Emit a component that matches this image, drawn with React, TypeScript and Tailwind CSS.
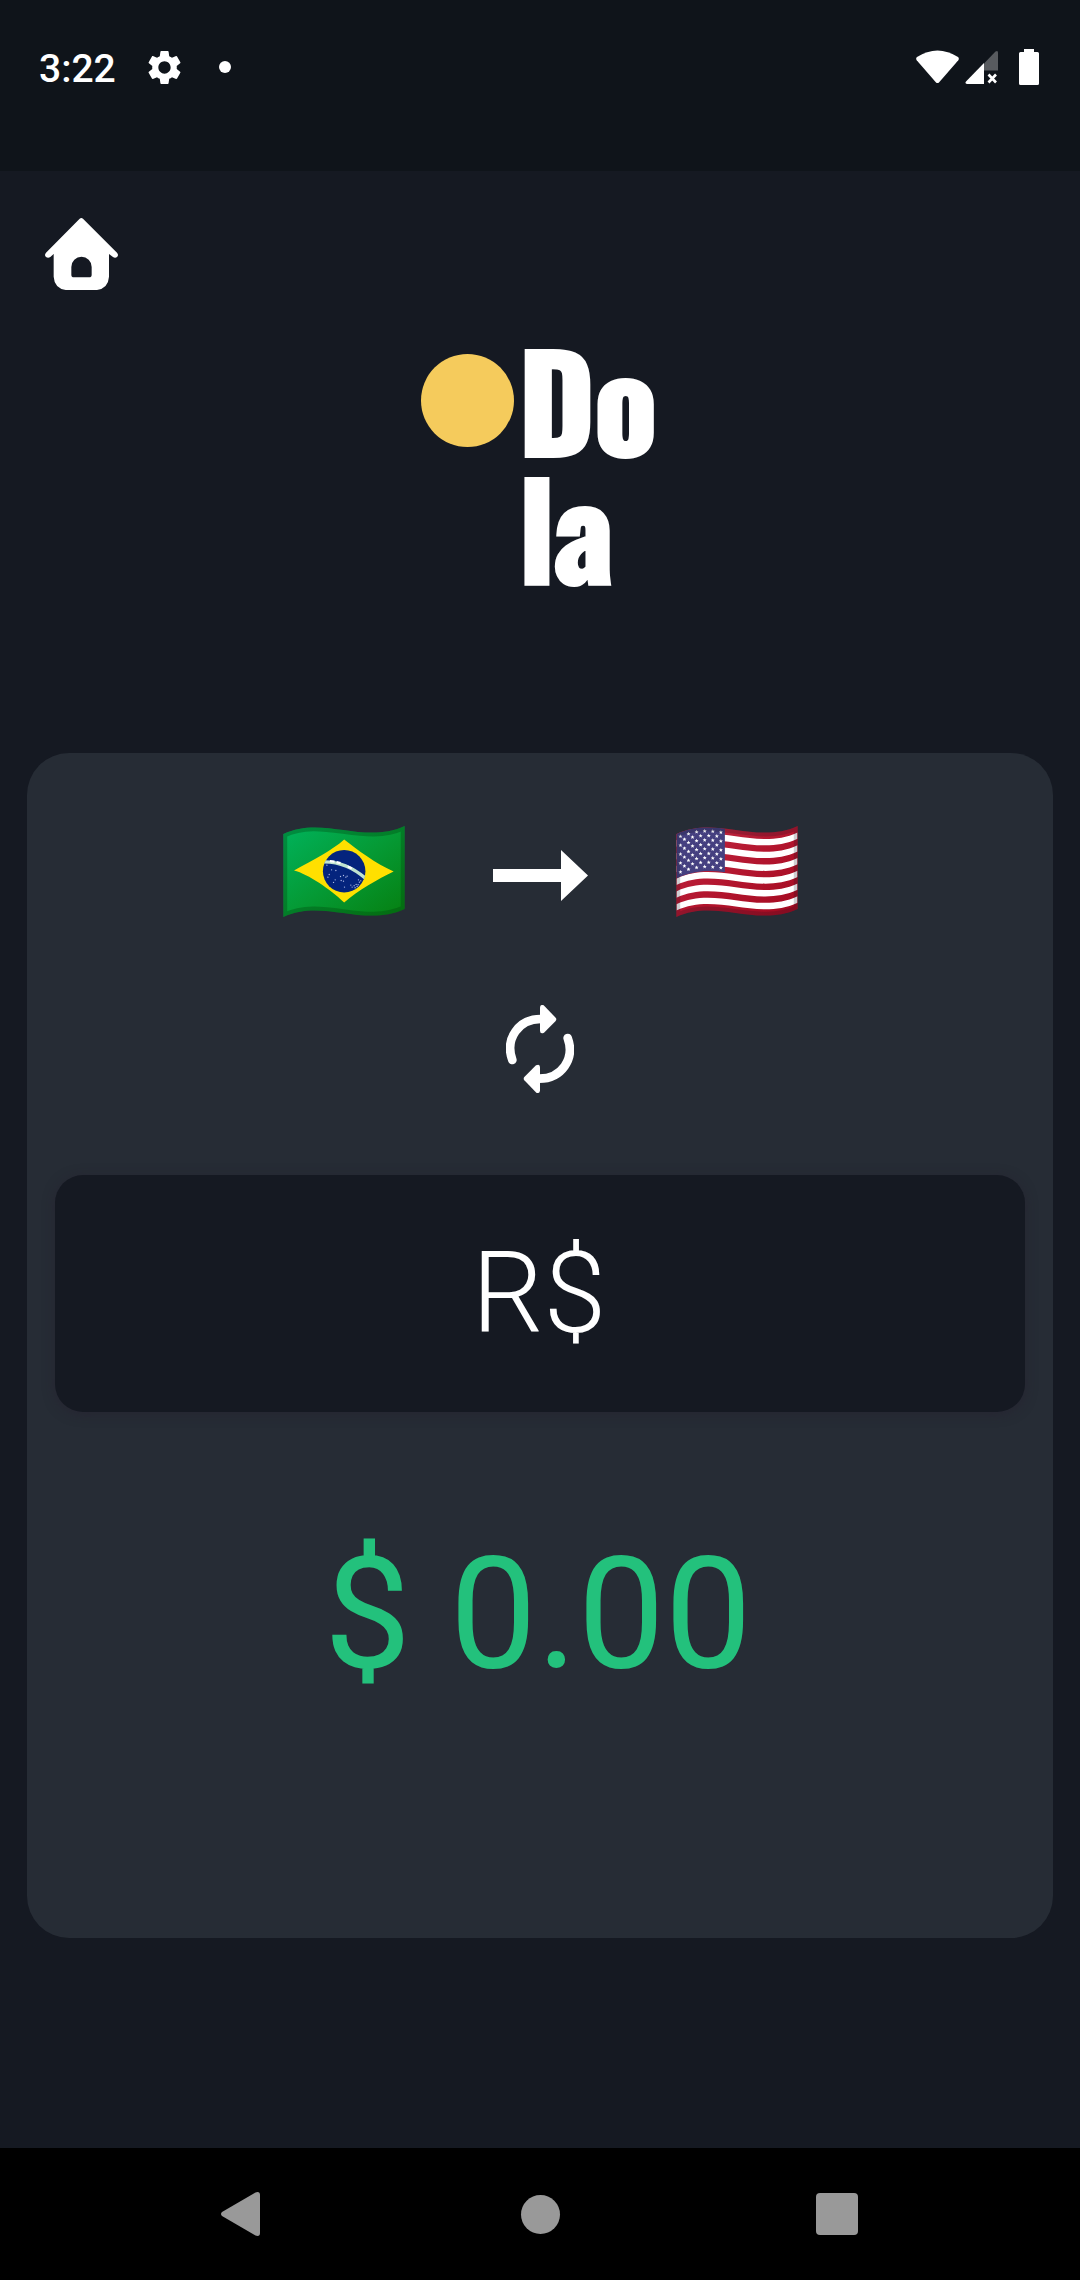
import { useId, useState } from "react";
import { MdSettings } from "react-icons/md";

const WAVE_FLAG =
  "M0 24C118 -33 242 57 365 0V250C242 307 118 217 0 274Z";

const STAR_COLUMNS = [32, 27.5, 24, 21, 18.5, 17, 16, 16.5, 17, 18, 19.5];

function BrazilFlag() {
  const id = useId();
  return (
    <svg viewBox="0 0 365 274" className="h-[91px] w-[122px]" role="img" aria-label="Brazil">
      <defs>
        <linearGradient id={id + "g"} x1="0" y1="0" x2="1" y2="1">
          <stop offset="0" stopColor="#00b35c" />
          <stop offset="0.5" stopColor="#059a35" />
          <stop offset="1" stopColor="#067f10" />
        </linearGradient>
        <clipPath id={id + "c"}>
          <path d={WAVE_FLAG} />
        </clipPath>
        <clipPath id={id + "b"}>
          <ellipse cx="183" cy="136" rx="65" ry="63" />
        </clipPath>
      </defs>
      <path d={WAVE_FLAG} fill={"url(#" + id + "g)"} />
      <g clipPath={"url(#" + id + "c)"}>
        <path d={WAVE_FLAG} fill="none" stroke="#00400b" strokeOpacity="0.32" strokeWidth="23" />
      </g>
      <path
        d="M183 41C220 70 280 115 332 137C285 160 225 194 183 230C140 190 75 145 32 134C90 102 145 75 183 41Z"
        fill="#ffe000"
      />
      <ellipse cx="183" cy="136" rx="64" ry="64" fill="#04247d" />
      <g clipPath={"url(#" + id + "b)"}>
        <path d="M116 108C165 106 210 124 250 160" fill="none" stroke="#bfe3cf" strokeWidth="10" />
        <path d="M140 106l14 1M160 109l12 3M194 122l12 6" stroke="#ffffff" strokeWidth="7" />
      </g>
      <g fill="#aebbe6">
        {[
          [131, 118], [138, 146], [134, 154], [158, 134], [156, 162], [151, 170],
          [172, 152], [174, 164], [181, 149], [188, 154], [192, 151], [181, 166],
          [184, 184], [203, 178], [207, 184], [213, 180], [219, 176], [216, 186],
          [225, 177], [229, 169], [226, 162], [145, 132], [233, 165], [222, 182],
        ].map(([x, y]) => (
          <circle key={x + "-" + y} cx={x} cy={y} r="2" />
        ))}
      </g>
    </svg>
  );
}

function UsaFlag() {
  const id = useId();
  const stripe = 250 / 13;
  return (
    <svg viewBox="0 0 365 274" className="h-[91px] w-[122px]" role="img" aria-label="United States">
      <defs>
        <linearGradient id={id + "r"} x1="0" y1="0" x2="1" y2="1">
          <stop offset="0" stopColor="#c12b44" />
          <stop offset="0.5" stopColor="#b3162f" />
          <stop offset="1" stopColor="#a30a20" />
        </linearGradient>
        <clipPath id={id + "c"}>
          <path d={WAVE_FLAG} />
        </clipPath>
      </defs>
      <path d={WAVE_FLAG} fill={"url(#" + id + "r)"} />
      <g clipPath={"url(#" + id + "c)"}>
        {[1, 3, 5, 7, 9, 11].map((n) => (
          <path
            key={n}
            d="M0 24C118 -33 242 57 365 0V19.2C242 76.2 118 -13.8 0 43.2Z"
            transform={"translate(0 " + n * stripe + ")"}
            fill="#ffffff"
          />
        ))}
        <path d="M0 24C50 0 98 2 146 8V139C98 132 50 134 0 158Z" fill="#454080" />
        {STAR_COLUMNS.map((top, col) =>
          Array.from({ length: col % 2 === 0 ? 5 : 4 }, (_, row) => (
            <path
              key={col + "-" + row}
              transform={"translate(" + (12 + col * 12.2) + " " + (top - 1 + row * 26.8 + (col % 2 === 0 ? 0 : 13.4)) + ")"}
              d="M0-6L1.7-1.9L6-1.7L2.7 1.2L3.8 5.4L0 3L-3.8 5.4L-2.7 1.2L-6-1.7L-1.7-1.9Z"
              fill="#ffffff"
            />
          )),
        )}
        <path d={WAVE_FLAG} fill="none" stroke="#10101c" strokeOpacity="0.2" strokeWidth="23" />
      </g>
    </svg>
  );
}

function StatusBar() {
  return (
    <header className="flex h-[171px] items-start justify-between bg-[#0f141a] pt-[44px] pr-[41px] pl-[39px] text-white">
      <div className="flex h-[46px] items-center">
        <time className="pt-1 text-[39px] leading-[46px] font-medium">3:22</time>
        <MdSettings className="ml-7 size-[41px]" aria-label="Settings" />
        <span className="ml-[34px] size-3 rounded-full bg-white" />
      </div>
      <div className="flex h-[46px] items-center">
        <svg viewBox="0 0 43 34" className="h-[34px] w-[43px]" role="img" aria-label="Wi-Fi">
          <path d="M1 7Q21.500-6 42 7Q43.500 8.500 42.300 10.200L23.200 32.200Q21.500 34 19.800 32.200L.7 10.200Q-.5 8.500 1 7Z" fill="#fff" />
        </svg>
        <svg viewBox="0 0 34 34" className="ml-[6px] h-[34px] w-[34px]" role="img" aria-label="No signal">
          <path d="M19 13.500L30.500 1.500Q33 0 33 2.500V20.500H19Z" fill="#585b5f" />
          <path d="M19 13V34H2Q-.5 33.500 1 31.500Z" fill="#fff" />
          <path d="M23.500 24.500L31 32.500M31 24.500L23.500 32.500" stroke="#fff" strokeWidth="2.600" />
        </svg>
        <svg viewBox="0 0 20 36" className="ml-5 h-9 w-5" role="img" aria-label="Battery full">
          <path d="M5 0H15V3H18.500Q20 3 20 4.500V34.500Q20 36 18.500 36H1.500Q0 36 0 34.500V4.500Q0 3 1.500 3H5Z" fill="#fff" />
        </svg>
      </div>
    </header>
  );
}

function Logo() {
  return (
    <div className="flex items-start justify-center pt-[44px]">
      <span className="mt-5 size-[93px] rounded-full bg-[#f5cb5c]" />
      <h1 className="w-[145px] pl-[5px] font-['Oswald','Roboto_Condensed','Roboto',sans-serif] text-[129px] leading-[128px] font-bold text-white [-webkit-text-stroke:4px_white]">
        Do
        <br />
        la
      </h1>
    </div>
  );
}

function NavigationBar() {
  return (
    <nav className="mt-auto flex h-[132px] items-center justify-between bg-black px-[216px]" aria-label="System">
      <button type="button" aria-label="Back" className="grid size-12 place-items-center">
        <svg viewBox="0 0 40 46" className="h-[46px] w-10">
          <path d="M2 21L35.500 1.400Q40 0 40 4V42Q40 46 35.500 44.600L2 25Q0 23 2 21Z" fill="#999" />
        </svg>
      </button>
      <button type="button" aria-label="Home" className="grid size-12 place-items-center">
        <span className="size-[39px] rounded-full bg-[#999]" />
      </button>
      <button type="button" aria-label="Recent apps" className="grid size-12 items-center justify-items-start">
        <span className="size-[42px] rounded-[4px] bg-[#999]" />
      </button>
    </nav>
  );
}

export default function App() {
  const [amount, setAmount] = useState("R$");
  const [swapped, setSwapped] = useState(false);

  return (
    <div className="flex min-h-screen flex-col bg-[#151922] font-['Roboto',sans-serif]">
      <StatusBar />
      <main>
        <div className="px-[45px] pt-[47px]">
          <button type="button" aria-label="Home page" className="block">
            <svg viewBox="0 0 219 216" className="h-[72px] w-[73px]">
              <path
                fillRule="evenodd"
                d="M104 2Q109-2 114 2L216 104Q222 111 216 117Q210 122 203 116L192 108V176Q190 210 156 216H62Q28 210 26 176V108L16 117Q9 122 3 117Q-3 111 3 104ZM79 147V170Q79 178 87 178H132Q140 178 140 170V147A30.500 30.500 0 0 0 79 147Z"
                fill="#fff"
              />
            </svg>
          </button>
        </div>
        <Logo />
        <section className="mx-[27px] mt-[163px] rounded-[42px] bg-[#262c35] px-7 pt-[73px] pb-[232px]">
          <div className="flex items-center justify-center gap-[88px]">
            {swapped ? <UsaFlag /> : <BrazilFlag />}
            <svg viewBox="0 0 95 51" className="mt-[7px] h-[51px] w-[95px]" aria-hidden="true">
              <path d="M0 19H68V0L95 25.500L68 51V32H0Z" fill="#fff" />
            </svg>
            {swapped ? <BrazilFlag /> : <UsaFlag />}
          </div>
          <button
            type="button"
            aria-label="Swap currencies"
            className="mx-auto mt-[88px] block"
            onClick={() => setSwapped(!swapped)}
          >
            <svg viewBox="0 0 204 264" className="h-[88px] w-[68px]">
              <g fill="none" stroke="#fff" strokeWidth="26" strokeLinecap="round">
                <path d="M19 165C-4 102 38 42 104 42" />
                <path d="M185 99C208 162 166 221 100 221" />
              </g>
              <g fill="#fff">
                <path d="M102 8Q102-3 113 1L149 38Q153 43 149 48L114 83Q102 88 102 77Z" />
                <path d="M102 256Q102 267 91 263L55 226Q51 221 55 216L90 181Q102 175 102 187Z" />
              </g>
            </svg>
          </button>
          <input
            type="text"
            aria-label="Amount"
            value={amount}
            onChange={(e) => setAmount(e.target.value)}
            className="mt-[82px] block h-[237px] w-full rounded-[28px] bg-[#151922] pr-[2px] text-center text-[113px] font-light text-white shadow-[0_2px_12px_rgba(38,30,45,0.500)] outline-none"
          />
          <output className="mt-[110px] block pr-1 text-center text-[155px] leading-[184px] text-[#23c17c]">
            $ 0.00
          </output>
        </section>
      </main>
      <NavigationBar />
    </div>
  );
}
